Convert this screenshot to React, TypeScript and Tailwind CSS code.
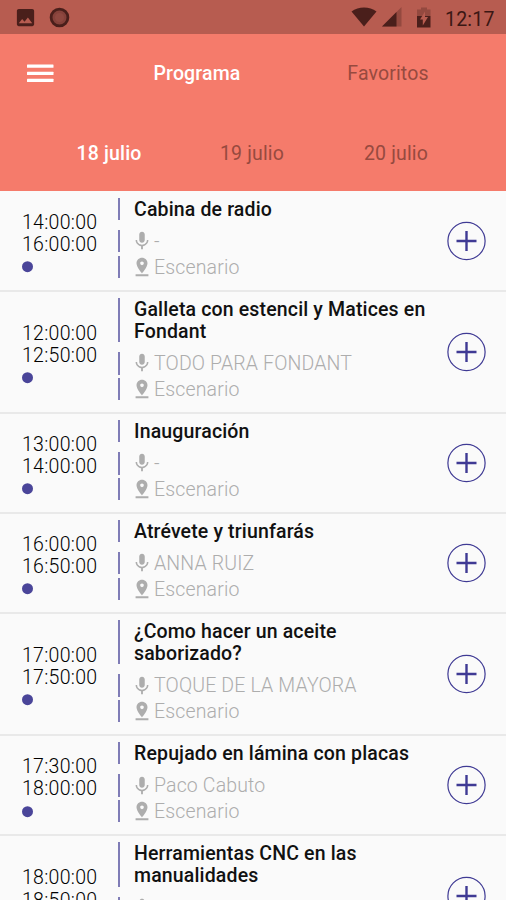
import { MdImage, MdMic, MdPinDrop } from 'react-icons/md';

interface ProgramEvent {
  start: string;
  end: string;
  title: string[];
  speaker: string;
  place: string;
}

const days = ['18 julio', '19 julio', '20 julio'];

const events: ProgramEvent[] = [
  { start: '14:00:00', end: '16:00:00', title: ['Cabina de radio'], speaker: '-', place: 'Escenario' },
  {
    start: '12:00:00',
    end: '12:50:00',
    title: ['Galleta con estencil y Matices en', 'Fondant'],
    speaker: 'TODO PARA FONDANT',
    place: 'Escenario',
  },
  { start: '13:00:00', end: '14:00:00', title: ['Inauguración'], speaker: '-', place: 'Escenario' },
  { start: '16:00:00', end: '16:50:00', title: ['Atrévete y triunfarás'], speaker: 'ANNA RUIZ', place: 'Escenario' },
  {
    start: '17:00:00',
    end: '17:50:00',
    title: ['¿Como hacer un aceite', 'saborizado?'],
    speaker: 'TOQUE DE LA MAYORA',
    place: 'Escenario',
  },
  {
    start: '17:30:00',
    end: '18:00:00',
    title: ['Repujado en lámina con placas'],
    speaker: 'Paco Cabuto',
    place: 'Escenario',
  },
  {
    start: '18:00:00',
    end: '18:50:00',
    title: ['Herramientas CNC en las', 'manualidades'],
    speaker: '-',
    place: 'Escenario',
  },
];

function StatusBar() {
  return (
    <div className="flex h-[34px] shrink-0 items-center bg-[#b75c50] pl-[14px] pr-[11px] text-[#4a1f1b]">
      <MdImage size={23} />
      <svg className="ml-[12px]" width="21" height="21" viewBox="0 0 21 21">
        <circle cx="10.5" cy="10.5" r="8.4" fill="#85413a" stroke="currentColor" strokeWidth="2.8" />
        <circle cx="10.5" cy="10.5" r="4.5" fill="#8f4840" />
      </svg>
      <div className="flex-1" />
      <svg width="26" height="20" viewBox="0 0 26 20">
        <path d="M0.5 4.5C7.5-.8 18.5-.8 25.5 4.5L13 19.5Z" fill="currentColor" />
      </svg>
      <svg className="ml-[5px]" width="20" height="20" viewBox="0 0 20 20">
        <path d="M19.5 0V19.5H0Z" fill="#94493f" />
        <path d="M14.5 5V19.5H0Z" fill="currentColor" />
      </svg>
      <svg className="ml-[14px]" width="16" height="21" viewBox="0 0 16 21">
        <path d="M5 .5H11V2.5H14.5V9H1V2.5H5Z" fill="#94493f" />
        <path d="M1 9H14.5V20.5H1Z" fill="currentColor" />
        <path d="M9 4.5V10H12L6.8 18.5V12.5H4Z" fill="#b75c50" />
      </svg>
      <span className="mt-[5px] ml-[13px] w-[50px] whitespace-nowrap text-[19.5px] leading-none tracking-[0.2px] text-[#3b1714]">12:17</span>
    </div>
  );
}

function Header() {
  return (
    <header className="shrink-0 bg-[#f57b6b] text-[19.5px] font-medium tracking-[0.15px] text-[#974a3f]">
      <div className="flex h-[79px] items-center pl-[27px]">
        <svg className="mr-[18px] text-white" width="27" height="19" viewBox="0 0 27 19" fill="currentColor">
          <rect y="0.5" width="26.5" height="3.2" rx="0.5" />
          <rect y="7.7" width="26.5" height="3.2" rx="0.5" />
          <rect y="14.8" width="26.5" height="3.2" rx="0.5" />
        </svg>
        <div className="grid flex-1 grid-cols-[250px_132px] text-center">
          <span className="text-white">Programa</span>
          <span className="font-normal">Favoritos</span>
        </div>
      </div>
      <div className="grid h-[78px] grid-cols-3 px-[37px] pt-[26px] text-center">
        {days.map((day, i) => (
          <span key={day} className={i === 0 ? 'text-white' : '-ml-[2px] font-normal'}>
            {day}
          </span>
        ))}
      </div>
    </header>
  );
}

function AddButton() {
  return (
    <button className="mr-[20px] translate-y-[3px] self-center text-[#3f3a94]">
      <svg width="39" height="40" viewBox="0 0 39 40" fill="none" stroke="currentColor">
        <circle cx="19.5" cy="20" r="18.6" strokeWidth="1.2" />
        <path d="M19.5 10V30M9.5 20H29.5" strokeWidth="2.4" />
      </svg>
    </button>
  );
}

function EventRow({ event }: { event: ProgramEvent }) {
  return (
    <li className="flex shrink-0 border-b-2 border-[#e9e9e9] pt-[6px] pb-[11.7px]">
      <div className="flex w-[118px] translate-y-[7.2px] flex-col justify-center pl-[22px] text-[19.5px] leading-[22.3px] font-light tracking-[0.28px] text-black">
        <span>{event.start}</span>
        <span>{event.end}</span>
        <div className="-mt-[0.8px] flex h-[22.3px] items-center">
          <span className="size-[11px] rounded-full bg-[#4a4599]" />
        </div>
      </div>
      <div className="flex flex-1 flex-col text-[19.5px] leading-[22.3px] tracking-[0.15px]">
        <h2 className="mb-[10.1px] border-l-2 border-[#7f7cb6] pl-[14px] font-medium text-[#111]">
          {event.title.map((line) => (
            <span key={line} className="block translate-y-px whitespace-nowrap">{line}</span>
          ))}
        </h2>
        <div className="mb-[3.3px] flex h-[22.3px] items-center border-l-2 border-[#7f7cb6] pl-[11px] font-light text-[#adadad]">
          <MdMic size={22} className="mr-px" />
          <span className="translate-y-px">{event.speaker}</span>
        </div>
        <div className="flex h-[22.3px] items-center border-l-2 border-[#7f7cb6] pl-[11px] font-light text-[#adadad]">
          <MdPinDrop size={22} className="mr-px" />
          <span className="translate-y-px">{event.place}</span>
        </div>
      </div>
      <AddButton />
    </li>
  );
}

export default function App() {
  return (
    <div className="flex h-[900px] w-[506px] flex-col overflow-hidden bg-[#fafafa] font-[Roboto,sans-serif]">
      <StatusBar />
      <Header />
      <ul className="flex flex-col pt-[0.6px]">
        {events.map((event) => (
          <EventRow key={event.start + event.title[0]} event={event} />
        ))}
      </ul>
    </div>
  );
}
